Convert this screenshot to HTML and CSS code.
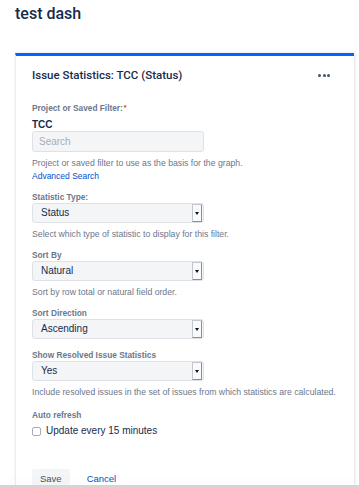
FILE: index.html
```html
<!DOCTYPE html>
<html lang="en">
<head>
    <meta charset="UTF-8">
    <meta name="viewport" content="width=device-width, initial-scale=1.0">
    <title>test dash</title>
    <link rel="stylesheet" href="styles.css">
</head>
<body>

    <h1 class="page-title">test dash</h1>

    <div class="gadget">
        <div class="gadget-header">
            <div class="gadget-title">Issue Statistics: TCC (Status)</div>
            <div class="gadget-menu"><span></span><span></span><span></span></div>
        </div>

        <form class="config">
            <div class="field">
                <div class="label">Project or Saved Filter:<span class="req">*</span></div>
                <div class="filter-name">TCC</div>
                <div class="text-input">Search</div>
                <div class="help">Project or saved filter to use as the basis for the graph.</div>
                <a class="link">Advanced Search</a>
            </div>

            <div class="field">
                <div class="label">Statistic Type:</div>
                <div class="select"><span class="value">Status</span><span class="arrow"></span></div>
                <div class="help">Select which type of statistic to display for this filter.</div>
            </div>

            <div class="field">
                <div class="label">Sort By</div>
                <div class="select"><span class="value">Natural</span><span class="arrow"></span></div>
                <div class="help">Sort by row total or natural field order.</div>
            </div>

            <div class="field no-help">
                <div class="label">Sort Direction</div>
                <div class="select"><span class="value">Ascending</span><span class="arrow"></span></div>
            </div>

            <div class="field">
                <div class="label">Show Resolved Issue Statistics</div>
                <div class="select"><span class="value">Yes</span><span class="arrow"></span></div>
                <div class="help">Include resolved issues in the set of issues from which statistics are calculated.</div>
            </div>

            <div class="field refresh">
                <div class="label">Auto refresh</div>
                <div class="check-row"><span class="checkbox"></span>Update every 15 minutes</div>
            </div>

            <div class="buttons">
                <span class="btn">Save</span>
                <a class="link cancel">Cancel</a>
            </div>
        </form>
    </div>

    <div class="window-edge"></div>

</body>
</html>
```

FILE: styles.css
```css
body {
    margin: 0;
    padding: 0 5px 0 15px;
    overflow: hidden;
    font-family: "Liberation Sans", Arial, sans-serif;
    color: #172b4d;
    background: #fff;
}

.page-title {
    margin: 0;
    padding-top: 4px;
    font-family: Roboto, "Liberation Sans", sans-serif;
    font-size: 16px;
    line-height: 20px;
    font-weight: 500;
    color: #172b4d;
}

.gadget {
    margin-top: 29px;
    border-top: 3px solid #0065ff;
    border-left: 1px solid #ebecf0;
    box-shadow: 1px 0 3px rgba(9,30,66,0.13);
    padding: 12px 16px 30px 16px;
}

.gadget-header {
    display: flex;
    align-items: center;
    justify-content: space-between;
    padding-right: 8px;
}

.gadget-title {
    font-family: Roboto, "Liberation Sans", sans-serif;
    font-size: 11.5px;
    line-height: 14px;
    font-weight: 500;
}

.gadget-menu {
    display: flex;
    gap: 1.5px;
}

.gadget-menu span {
    width: 3px;
    height: 3px;
    border-radius: 50%;
    background: #42526e;
}

.config {
    margin-top: 20px;
}

.field {
    margin-bottom: 9px;
}

.field.no-help {
    margin-bottom: 10px;
}

.field.refresh {
    margin-top: 11px;
}

.label {
    font-size: 8.3px;
    line-height: 12px;
    font-weight: bold;
    color: #6b778c;
}

.req {
    color: #de350b;
    font-size: 7px;
    vertical-align: top;
    margin-left: 1px;
}

.filter-name {
    font-size: 10px;
    line-height: 14px;
    font-weight: bold;
    margin-top: 4px;
    margin-bottom: -1px;
}

.text-input {
    width: 158px;
    height: 19px;
    line-height: 19px;
    padding: 0 6px;
    background: #f4f5f7;
    border: 1px solid #dfe1e6;
    border-radius: 3px;
    font-size: 10px;
    color: #a5adba;
}

.help {
    margin-top: 5px;
    font-size: 8.7px;
    line-height: 12px;
    color: #6b778c;
}

.link {
    display: block;
    margin-top: 1px;
    font-size: 8.5px;
    line-height: 12px;
    color: #0052cc;
    text-decoration: none;
}

.select {
    display: flex;
    width: 170px;
    height: 18px;
    background: #f4f5f7;
    border: 1px solid #dfe1e6;
    border-radius: 3px;
}

.select .value {
    flex: 1;
    padding-left: 8px;
    font-size: 10px;
    line-height: 18px;
    color: #172b4d;
}

.select .arrow {
    width: 8px;
    margin: 0 1px 0 0;
    background: #fafafa;
    border: 1px solid #c1c7d0;
    border-right-color: #8a8f96;
    border-bottom-color: #8a8f96;
    border-radius: 1px;
    display: flex;
    align-items: center;
    justify-content: center;
}

.select .arrow::after {
    content: "";
    border-left: 2px solid transparent;
    border-right: 2px solid transparent;
    border-top: 3px solid #111;
}

.check-row {
    display: flex;
    align-items: center;
    margin-top: 3px;
    font-size: 10px;
    line-height: 14px;
    color: #172b4d;
}

.checkbox {
    width: 7px;
    height: 7px;
    border: 1px solid #a5adba;
    border-radius: 2px;
    margin-right: 5px;
    background: #fff;
}

.buttons {
    display: flex;
    align-items: center;
    gap: 17px;
    margin-top: 31px;
}

.btn {
    padding: 0 8px;
    height: 20px;
    line-height: 20px;
    font-size: 9.5px;
    color: #42526e;
    background: #f4f5f7;
    border-radius: 3px;
}

.link.cancel {
    margin: 0;
    font-size: 9.5px;
}

.window-edge {
    position: fixed;
    left: 0;
    right: 0;
    bottom: 0;
    height: 2px;
    background: #d4d4d4;
    box-shadow: 0 -6px 8px rgba(0,0,0,0.03);
}
```
